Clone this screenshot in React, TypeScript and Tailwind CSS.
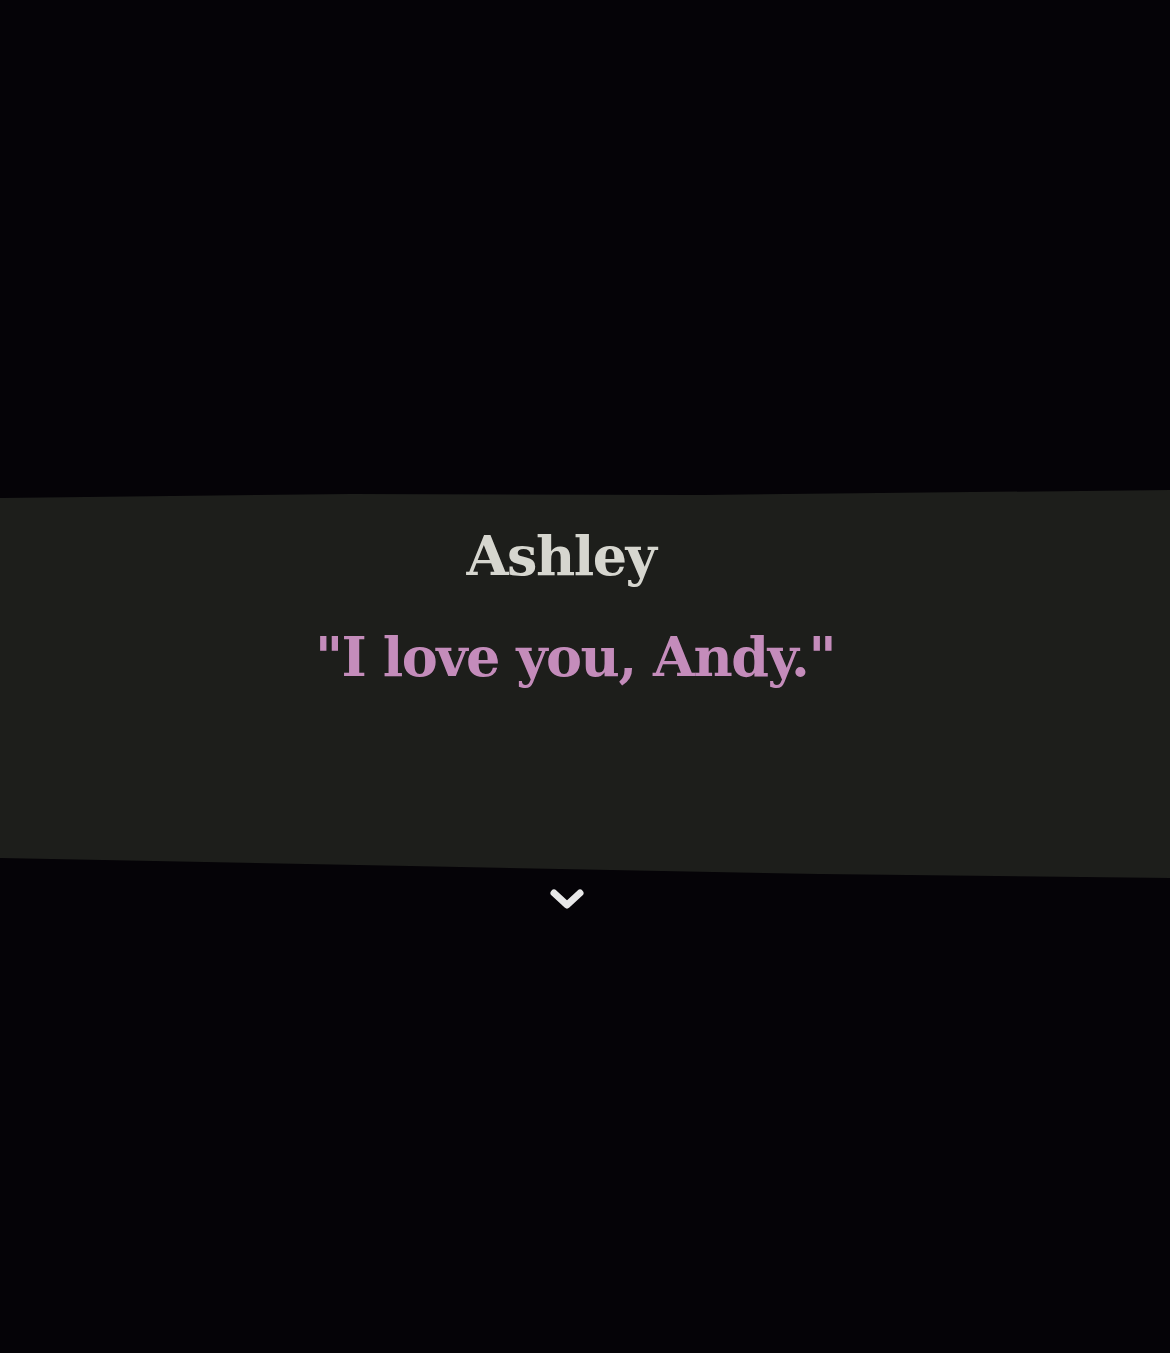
export default function App() {
  return (
    <div className="w-[1170px] h-[1353px] bg-[#050307] flex flex-col overflow-hidden">
      <div className="h-[490px]" />
      <div className="h-[390px] bg-[#1d1e1b] flex flex-col items-center font-['DejaVu_Serif',serif] font-bold [clip-path:polygon(0_8px,30%_4px,60%_5px,100%_0,100%_388px,70%_384px,35%_376px,0_368px)]">
        <p className="mt-[31px] mr-[48px] text-[54px] leading-[70px] text-[#d6d6cf] tracking-[-1.5px]">
          Ashley
        </p>
        <p className="mt-[31px] mr-[20px] text-[54px] leading-[70px] text-[#c48cbb] tracking-[-1.5px]">
          "I love you, Andy."
        </p>
      </div>
      <div className="flex justify-center mr-[36px] mt-[6px]">
        <svg width="36" height="26" viewBox="0 0 36 26">
          <path d="M5 7 L18 19 L31 7" fill="none" stroke="#e8e8e8" strokeWidth="7" strokeLinecap="round" strokeLinejoin="round" />
        </svg>
      </div>
    </div>
  );
}
